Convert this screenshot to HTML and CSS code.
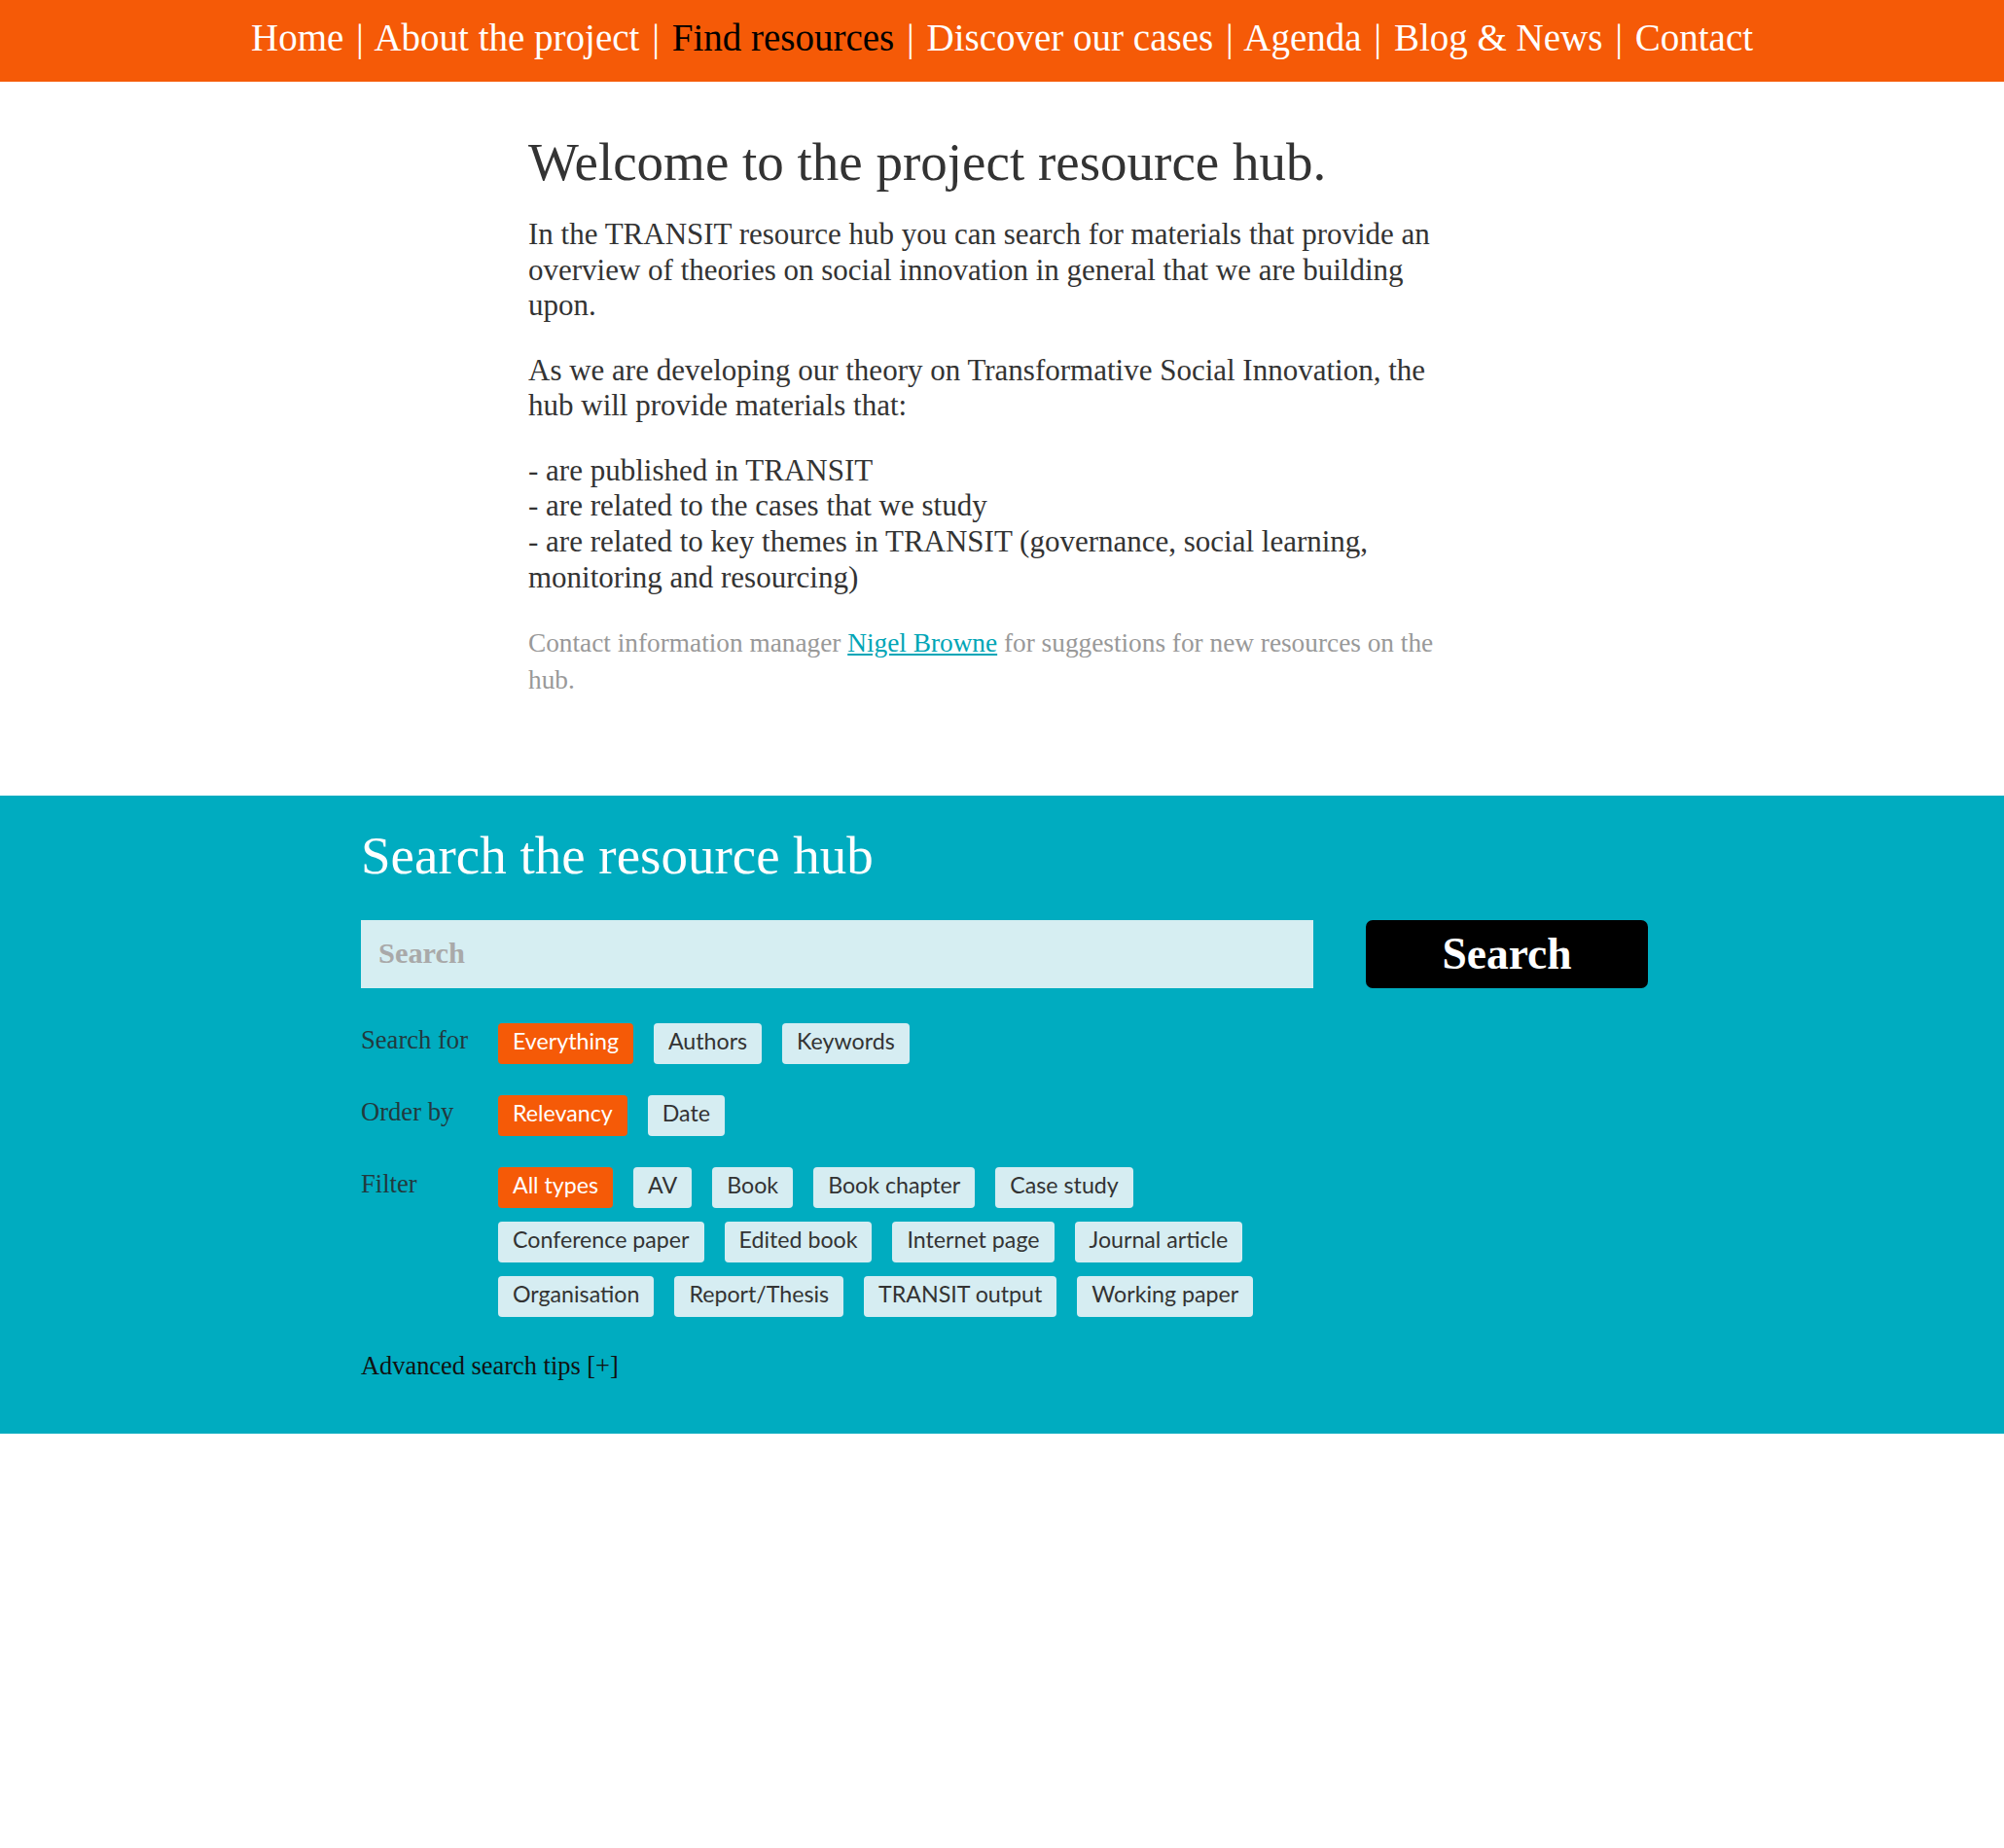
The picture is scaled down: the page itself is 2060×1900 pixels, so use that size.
FILE: index.html
```html
<!DOCTYPE html>
<html lang="en">
<head>
<meta charset="utf-8">
<title>Find resources</title>
<link rel="stylesheet" href="styles.css">
</head>
<body>
<header class="topbar">
  <nav class="mainnav">
    <a href="#">Home</a> <span class="sep">|</span> <a href="#">About the project</a> <span class="sep">|</span> <a href="#" class="active">Find resources</a> <span class="sep">|</span> <a href="#">Discover our cases</a> <span class="sep">|</span> <a href="#">Agenda</a> <span class="sep">|</span> <a href="#">Blog &amp; News</a> <span class="sep">|</span> <a href="#">Contact</a>
  </nav>
</header>
<main>
  <section class="intro">
    <h1>Welcome to the project resource hub.</h1>
    <p>In the TRANSIT resource hub you can search for materials that provide an overview of theories on social innovation in general that we are building upon.</p>
    <p>As we are developing our theory on Transformative Social Innovation, the hub will provide materials that:</p>
    <ul class="points">
      <li>- are published in TRANSIT</li>
      <li>- are related to the cases that we study</li>
      <li>- are related to key themes in TRANSIT (governance, social learning, monitoring and resourcing)</li>
    </ul>
    <p class="note"><span>Contact information manager</span> <a href="#">Nigel Browne</a> <span>for suggestions for new resources on the</span> <span>hub.</span></p>
  </section>
  <section class="hub">
    <div class="hub-inner">
      <h2>Search the resource hub</h2>
      <form class="searchform">
        <div class="searchrow">
          <input type="text" class="searchinput" placeholder="Search">
          <button type="button" class="searchbtn">Search</button>
        </div>
        <div class="optrow">
          <span class="optlabel">Search for</span>
          <div class="tags">
            <span class="tag on">Everything</span><span class="tag">Authors</span><span class="tag">Keywords</span>
          </div>
        </div>
        <div class="optrow">
          <span class="optlabel">Order by</span>
          <div class="tags">
            <span class="tag on">Relevancy</span><span class="tag">Date</span>
          </div>
        </div>
        <div class="optrow">
          <span class="optlabel">Filter</span>
          <div class="tags">
            <span class="tag on">All types</span><span class="tag">AV</span><span class="tag">Book</span><span class="tag">Book chapter</span><span class="tag">Case study</span><span class="tag">Conference paper</span><span class="tag">Edited book</span><span class="tag">Internet page</span><span class="tag">Journal article</span><span class="tag">Organisation</span><span class="tag">Report/Thesis</span><span class="tag">TRANSIT output</span><span class="tag">Working paper</span>
          </div>
        </div>
        <a href="#" class="advanced">Advanced search tips [+]</a>
      </form>
    </div>
  </section>
</main>
</body>
</html>
```
FILE: styles.css
```css
* { box-sizing: border-box; }
html, body { margin: 0; padding: 0; background: #fff; }
body { font-family: "Liberation Serif", "DejaVu Serif", serif; color: #333; }

.topbar { background: #f55a07; height: 84px; }
.mainnav { font-size: 39px; line-height: 77px; color: #fff; text-align: center; white-space: nowrap; }
.mainnav a { color: #fff; text-decoration: none; }
.mainnav a.active { color: #000; }
.mainnav .sep { padding: 0 3px; }

.intro { width: 950px; margin: 0 0 0 calc(50% - 487px); padding: 51px 0 100px; }
.intro h1 { font-size: 55px; font-weight: 400; line-height: 64px; margin: 0 0 24px; }
.intro p { font-size: 31px; line-height: 36.5px; margin: 0 0 30px; }
.points { list-style: none; margin: 0 0 29px; padding: 0; font-size: 31px; line-height: 36.8px; }
.intro p.note { font-size: 27.3px; line-height: 38px; color: #999; margin: 0; }
.intro p.note a { color: #00a5b6; }

.hub { background: #00acc0; padding: 30px 0 52px; }
.hub-inner { width: 1323px; margin: 0 0 0 calc(50% - 659px); }
.hub h2 { font-size: 55px; font-weight: 400; line-height: 64px; color: #fff; margin: 0 0 34px; }
.searchrow { display: flex; gap: 54px; margin-bottom: 36px; }
.searchinput { flex: 0 0 979px; height: 70px; border: 0; background: #d6eef2; padding: 0 18px; font: 700 30.4px "Liberation Serif", serif; color: #333; }
.searchinput::placeholder { color: #a9a9a9; }
.searchbtn { flex: 0 0 290px; height: 70px; border: 0; border-radius: 7px; background: #000; color: #fff; font: 700 45.5px "Liberation Serif", serif; }
.optrow { display: flex; align-items: flex-start; margin-bottom: 32px; width: 979px; }
.optlabel { flex: 0 0 141px; font-size: 26.6px; line-height: 34px; color: #22393e; }
.tags { display: flex; flex-wrap: wrap; gap: 14px 21px; flex: 1; }
.tag { height: 42px; line-height: 38px; padding: 4px 15px 0; border-radius: 4px; background: #d6edf2; color: #333; font: 400 23.2px "Lato", sans-serif; }
.tag.on { background: #f55a07; color: #fff; }
.advanced { display: block; color: #111; text-decoration: none; font-size: 26.4px; line-height: 36px; }
```
